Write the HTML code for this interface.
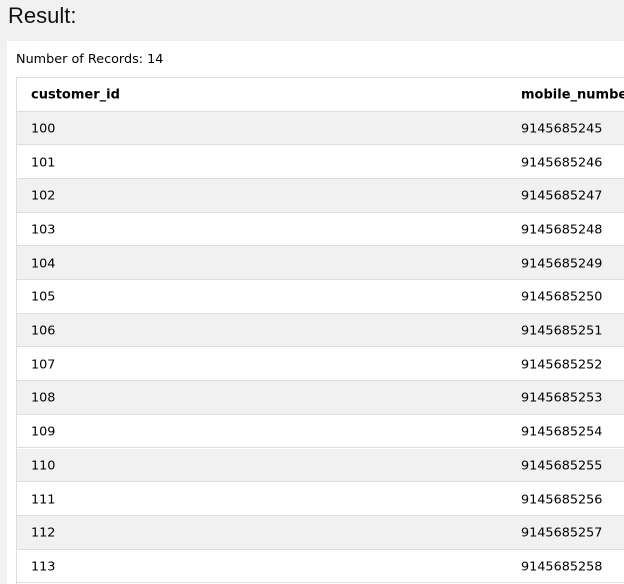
<!DOCTYPE html>
<html><head><meta charset="utf-8"><style>
html,body{margin:0;padding:0;background:#f1f1f1;width:624px;height:584px;overflow:hidden;font-family:"DejaVu Sans",Verdana,sans-serif;color:#000;position:relative}
.title{position:absolute;left:8px;top:3px;font-family:"Liberation Sans",sans-serif;font-size:22px;color:#111}
.panel{position:absolute;left:7px;top:41px;width:617px;height:543px;background:#fff}
.cnt{position:absolute;left:16px;top:52px;font-size:12.8px}
.tbl{position:absolute;left:16px;top:77px;width:608px;height:507px;border:1px solid #ddd;border-right:none;border-bottom:none;box-sizing:border-box}
.r{position:absolute;left:16px;width:608px;height:33.7px;border-bottom:1px solid #ddd;border-left:1px solid #ddd;box-sizing:border-box;font-size:12.8px;overflow:hidden;white-space:nowrap}
.r span{position:absolute;top:50%;transform:translateY(-45%)}
.a{left:14px}.b{left:504px}
.h{font-weight:bold;font-size:13px}
.g{background:#f1f1f1}
</style></head><body>
<div class="title">Result:</div>
<div class="panel"></div>
<div class="cnt">Number of Records: 14</div>
<div class="tbl"></div>
<div class="r h" style="top:78px"><span class="a">customer_id</span><span class="b">mobile_number</span></div>
<div class="r g" style="top:111.5px"><span class="a">100</span><span class="b">9145685245</span></div>
<div class="r" style="top:145.2px"><span class="a">101</span><span class="b">9145685246</span></div>
<div class="r g" style="top:178.9px"><span class="a">102</span><span class="b">9145685247</span></div>
<div class="r" style="top:212.6px"><span class="a">103</span><span class="b">9145685248</span></div>
<div class="r g" style="top:246.3px"><span class="a">104</span><span class="b">9145685249</span></div>
<div class="r" style="top:280px"><span class="a">105</span><span class="b">9145685250</span></div>
<div class="r g" style="top:313.7px"><span class="a">106</span><span class="b">9145685251</span></div>
<div class="r" style="top:347.4px"><span class="a">107</span><span class="b">9145685252</span></div>
<div class="r g" style="top:381.1px"><span class="a">108</span><span class="b">9145685253</span></div>
<div class="r" style="top:414.8px"><span class="a">109</span><span class="b">9145685254</span></div>
<div class="r g" style="top:448.5px"><span class="a">110</span><span class="b">9145685255</span></div>
<div class="r" style="top:482.2px"><span class="a">111</span><span class="b">9145685256</span></div>
<div class="r g" style="top:515.9px"><span class="a">112</span><span class="b">9145685257</span></div>
<div class="r" style="top:549.6px"><span class="a">113</span><span class="b">9145685258</span></div>
</body></html>
